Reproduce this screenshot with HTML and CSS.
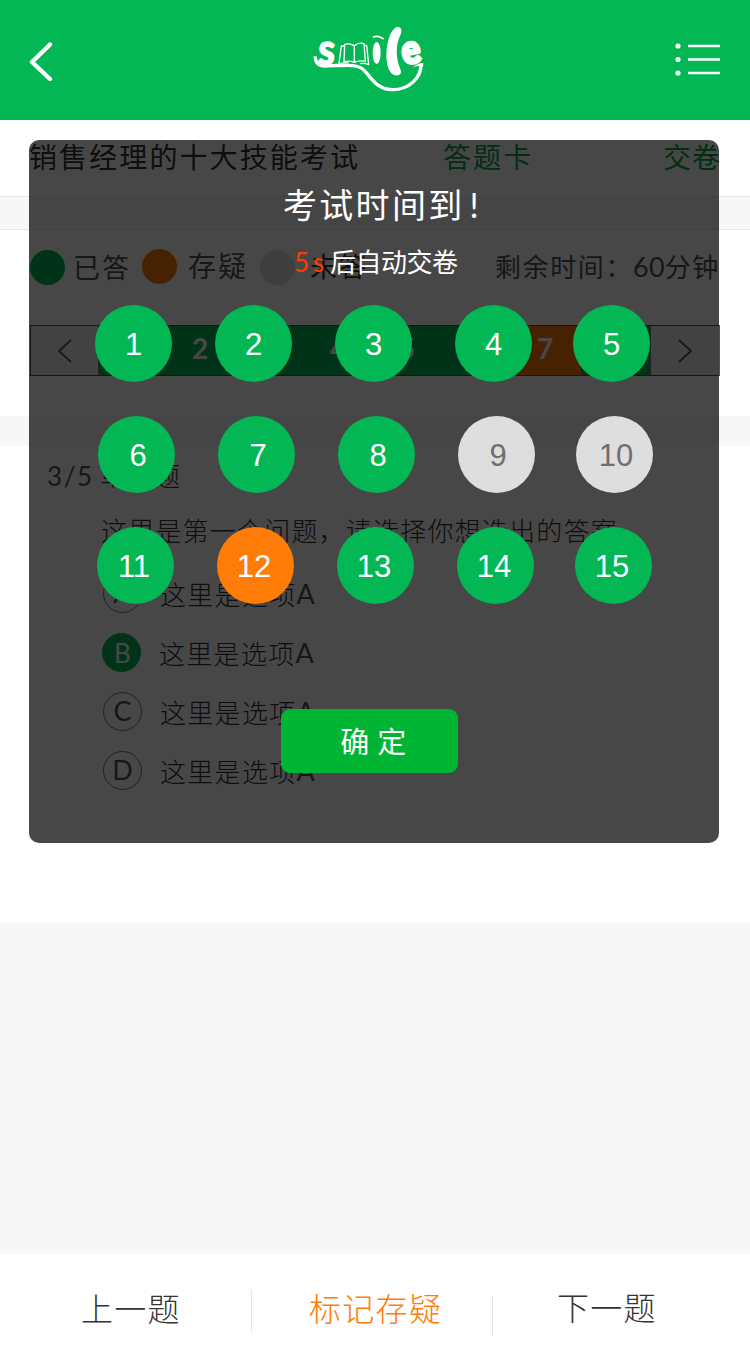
FILE: index.html
```html
<!DOCTYPE html>
<html lang="zh-CN">
<head>
<meta charset="utf-8">
<title>销售经理的十大技能考试</title>
<link rel="stylesheet" href="styles.css">
</head>
<body>
<div class="page">
  <header class="topbar">
    <svg class="back" viewBox="0 0 24 40" aria-label="返回"><path d="M21 3.500 3 21 21 38" fill="none" stroke="#fff" stroke-width="4.400" stroke-linecap="round" stroke-linejoin="round"/></svg>
    <svg class="logo" viewBox="0 0 420 255" fill="none" stroke="#fff" aria-label="smile">
      <text class="logo-s" transform="translate(52 147) rotate(4) scale(.92 1.04)">s</text>
      <path d="M45 124C47 143 53 149 62 151 72 157 90 149 122 152 151 150 174 151 188 162 211 181 224 222 276 224 327 225 364 188 363 148" stroke-width="10"/>
      <path d="M338 158Q353 143 370 144L369 157Q354 149 338 158Z" fill="#fff" stroke="none"/>
      <g class="logo-book">
        <path d="M134 88Q149 84 163 92L163 142Q146 135 132 141ZM163 92Q176 81 192 86L196 139Q177 135 163 142"/>
        <path d="M132 93 124 93 117 146Q132 143 146 144M193 91 200 92 206 149Q193 143 180 146"/>
      </g>
      <path d="M220 66Q235 61 249 71" stroke-width="5" stroke-linecap="round"/>
      <ellipse cx="230" cy="114" rx="12" ry="33" fill="#fff" stroke="none"/>
      <path d="M288 37C304 33 309 46 300 63 287 90 287 128 301 163 308 177 295 186 281 179 248 166 254 58 288 37Z" fill="#fff" stroke="none"/>
      <text class="logo-e" transform="translate(311 149) rotate(-10) scale(.9 1.03)">e</text>
    </svg>
    <svg class="menu" viewBox="0 0 46 34" fill="#fff" aria-label="菜单"><circle cx="3" cy="4" r="2.600"/><circle cx="3" cy="17.500" r="2.600"/><circle cx="3" cy="31" r="2.600"/><path d="M13 2.800H45V5.200H13ZM13 16.300H45V18.700H13ZM13 29.800H45V32.200H13Z"/></svg>
  </header>

  <section class="exam-head">
    <span class="exam-title">销售经理的十大技能考试</span>
    <span class="card-link">答题卡</span>
    <span class="submit-link">交卷</span>
  </section>
  <div class="band band-lined"></div>

  <section class="status">
    <div class="legend">
      <i class="dot green"></i><span class="done">已答</span>
      <i class="dot orange"></i><span class="doubt">存疑</span>
      <i class="dot grey"></i><span class="todo">未答</span>
      <span class="remain">剩余时间：<b>60</b>分钟</span>
    </div>
    <nav class="pager">
      <span class="arrow"><svg viewBox="0 0 16 26"><path d="M14 2 2 13 14 24"/></svg></span>
      <span>1</span><span>2</span><span>3</span><span>4</span><span>5</span><span>6</span><span class="marked">7</span><span>8</span>
      <span class="arrow"><svg viewBox="0 0 16 26"><path d="M2 2 14 13 2 24"/></svg></span>
    </nav>
  </section>
  <div class="band"></div>

  <main class="question">
    <h2><span class="count">3/5</span>单选题</h2>
    <p class="stem">这里是第一个问题，请选择你想选出的答案</p>
    <ul class="options">
      <li><i>A</i>这里是选项<b>A</b></li>
      <li class="chosen"><i>B</i>这里是选项<b>A</b></li>
      <li><i>C</i>这里是选项<b>A</b></li>
      <li><i>D</i>这里是选项<b>A</b></li>
    </ul>
  </main>

  <footer class="actions">
    <span class="prev">上一题</span>
    <span class="mark">标记存疑</span>
    <span class="next">下一题</span>
  </footer>

  <div class="dialog">
    <h1>考试时间到<span>!</span></h1>
    <p class="countdown"><em>5s</em>后自动交卷</p>
    <div class="answers">
      <div class="row r1"><span>1</span><span>2</span><span>3</span><span>4</span><span>5</span></div>
      <div class="row r2"><span>6</span><span>7</span><span>8</span><span class="blank">9</span><span class="blank">10</span></div>
      <div class="row r3"><span>11</span><span class="flag">12</span><span>13</span><span>14</span><span>15</span></div>
    </div>
    <button class="confirm">确 定</button>
  </div>
</div>
</body>
</html>
```

FILE: styles.css
```css
* { box-sizing: border-box; margin: 0; padding: 0; }
body { background: #f7f7f7; font-family: Lato, "Noto Sans CJK SC", sans-serif; color: #333; }
i, em { font-style: normal; }
b { font-weight: inherit; }
.page { position: relative; width: 750px; height: 1354px; display: flex; flex-direction: column; overflow: hidden; white-space: nowrap; }

.topbar { height: 120px; background: #04b755; border-bottom: 1px solid #0aae52; display: flex; align-items: flex-start; }
.back { width: 24px; height: 40px; margin: 41px 0 0 29px; }
.logo { width: 140px; height: 85px; margin: 15px 0 0 247px; }
.logo text { fill: #fff; stroke: #fff; font-family: Lato, sans-serif; font-weight: 900; }
.logo-s { font-size: 126px; stroke-width: 3px; }
.logo-e { font-size: 116px; stroke-width: 9px; }
.logo-book path { stroke-width: 4px; stroke-linejoin: round; }
.menu { width: 46px; height: 34px; margin: 42px 0 0 235px; }

.exam-head { height: 76px; background: #fff; padding-left: 29px; display: flex; font-size: 28px; line-height: 74px; letter-spacing: 2.1px; color: #333; }
.exam-title { width: 414px; }
.card-link { width: 220px; color: #00a64b; }
.submit-link { color: #00a64b; letter-spacing: 1px; }
.band { height: 30px; background: #f7f7f7; }
.band-lined { height: 34px; border-top: 1px solid #e8e8e8; border-bottom: 1px solid #e8e8e8; }

.status { height: 186px; background: #fff; padding-left: 30px; }
.legend { height: 95px; display: flex; align-items: flex-start; padding-top: 20px; font-size: 27px; line-height: 34px; letter-spacing: 2px; color: #555; }
.dot { width: 35px; height: 35px; border-radius: 50%; }
.green { background: #00b755; }
.orange { background: #ff7c08; margin-top: -1px; }
.grey { background: #dedede; }
.done { width: 69px; margin: 1px 0 0 8px; }
.doubt { width: 72px; margin: -1px 0 0 11px; font-size: 28px; }
.todo { width: 185px; margin-left: 15px; color: #333; }
.remain { font-size: 26px; letter-spacing: 1.6px; }
.remain b { font-size: 27px; letter-spacing: .2px; }
.pager { width: 690px; height: 51px; display: grid; grid-template-columns: 68px repeat(8, 69px) 68px; border: 1px solid #555; background: #00b755; color: #fff; }
.pager span { display: flex; align-items: center; justify-content: center; padding: 0 4px 5px 0; border-right: 1px solid #777; font-size: 28px; font-weight: 700; }
.pager .marked { background: #ff7c08; }
.pager .arrow { background: #eee; padding: 1px 0 0; }
.pager .arrow:last-child { border: 0; }
.arrow svg { width: 16px; height: 26px; fill: none; stroke: #555; stroke-width: 1.8; }

.question { height: 477px; background: #fff; font-weight: 300; }
.question h2 { padding: 13px 0 0 47px; display: flex; font-size: 26px; line-height: 34px; font-weight: 300; letter-spacing: 1px; }
.count { width: 53px; letter-spacing: 1.6px; color: #555; font-weight: 400; }
.stem { margin: 21px 0 0 101px; font-size: 26px; line-height: 34px; letter-spacing: 1.2px; }
.options { list-style: none; margin: 26px 0 0 103px; display: flex; flex-direction: column; gap: 20px; }
.options li { height: 39px; display: flex; align-items: center; padding-bottom: 1px; font-size: 26px; letter-spacing: 1.3px; }
.options i { width: 39px; height: 39px; margin: 1px 18px 0 0; border: 1px solid #777; border-radius: 50%; display: flex; align-items: center; justify-content: center; padding-bottom: 2px; font-size: 27px; font-weight: 400; letter-spacing: 0; color: #555; }
.options b { font-size: 27px; font-weight: 400; color: #555; }
.options .chosen { margin-left: -1px; }
.options .chosen i { background: #00b755; border-color: #00b755; color: #fff; padding: 1px 0 0 2px; font-size: 26px; }

.actions { margin-top: auto; height: 100px; background: #fff; display: flex; font-size: 32px; line-height: 42px; letter-spacing: 1.3px; font-weight: 300; }
.prev { width: 252px; height: 42px; margin-top: 36px; padding-left: 81px; line-height: 38px; border-right: 1px solid #e4e4e4; }
.mark { width: 241px; height: 41px; margin-top: 41px; padding-left: 57px; line-height: 27px; color: #ff7c08; border-right: 1px solid #e4e4e4; }
.next { margin: 33px 0 0 64px; }

.dialog { position: absolute; left: 29px; top: 140px; width: 690px; height: 703px; border-radius: 10px; background: rgba(0, 0, 0, .72); color: #fff; }
.dialog h1 { margin: 42px 0 0 254px; font-size: 34px; line-height: 46px; font-weight: 400; letter-spacing: 2.3px; }
.dialog h1 span { margin-left: 5px; }
.countdown { margin-top: 17px; padding-left: 265px; display: flex; font-size: 26px; line-height: 34px; letter-spacing: -.5px; }
.countdown em { width: 36px; color: #ff3c00; letter-spacing: 4px; }
.answers { margin-top: 26px; display: flex; flex-direction: column; gap: 34px; font: 31px "Liberation Sans", Arial, sans-serif; }
.row { display: grid; grid-template-columns: repeat(3, 120px) 118px 77px; }
.row span { width: 77px; height: 77px; border-radius: 50%; background: #04b755; display: flex; align-items: center; justify-content: center; padding-top: 3px; }
.r1 { margin-left: 66px; }
.r2 { margin-left: 69px; }
.r2 span { padding-left: 3px; }
.r3 { margin-left: 67.5px; margin-top: -.5px; }
.r3 span { padding-right: 2px; }
.row .blank { background: #dedede; color: #6f6f6f; }
.row .flag { background: #ff7c08; }
.confirm { display: block; width: 177px; height: 64px; margin: 105.5px 0 0 252px; padding: 0 0 2px 8px; border: 0; border-radius: 9px; background: #00b533; color: #fff; font: 29px Lato, "Noto Sans CJK SC", sans-serif; letter-spacing: .3px; }
```
